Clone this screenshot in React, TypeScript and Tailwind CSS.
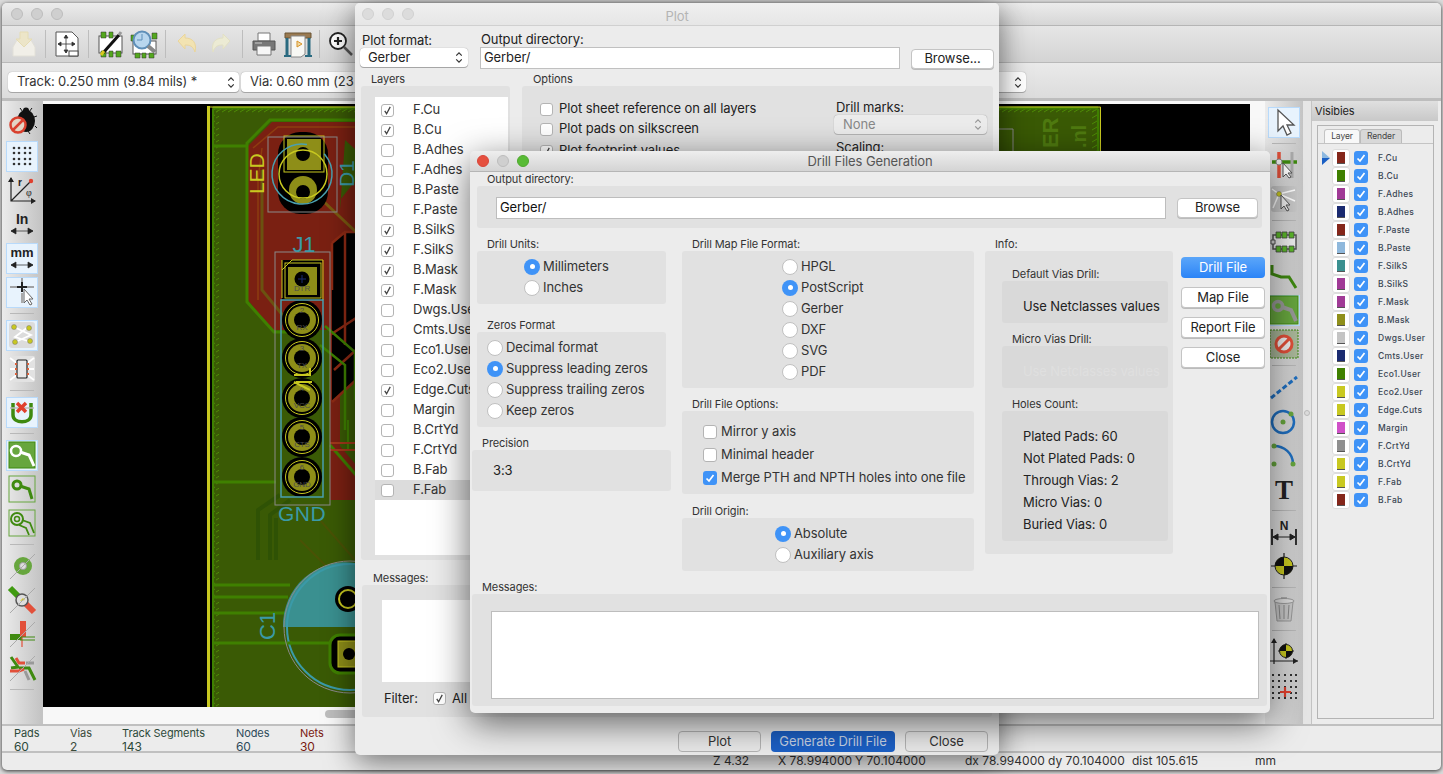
import type { ReactNode } from "react"

const plotLayers = [
  ["F.Cu", true], ["B.Cu", true], ["B.Adhes", false], ["F.Adhes", false], ["B.Paste", false],
  ["F.Paste", false], ["B.SilkS", true], ["F.SilkS", true], ["B.Mask", true], ["F.Mask", true],
  ["Dwgs.User", false], ["Cmts.User", false], ["Eco1.User", false], ["Eco2.User", false], ["Edge.Cuts", true],
  ["Margin", false], ["B.CrtYd", false], ["F.CrtYd", false], ["B.Fab", false], ["F.Fab", false],
] as const

const visibleLayers = [
  ["F.Cu", "#84261a"], ["B.Cu", "#3f8000"], ["F.Adhes", "#a03a96"], ["B.Adhes", "#1a2a70"], ["F.Paste", "#84261a"],
  ["B.Paste", "#8fb8dc"], ["F.SilkS", "#3a9090"], ["B.SilkS", "#a03a96"], ["F.Mask", "#a03a96"], ["B.Mask", "#8f8f1a"],
  ["Dwgs.User", "#c4c4c4"], ["Cmts.User", "#1a2a70"], ["Eco1.User", "#3f8000"], ["Eco2.User", "#c8c820"], ["Edge.Cuts", "#c8c820"],
  ["Margin", "#d050c8"], ["F.CrtYd", "#8f8f8f"], ["B.CrtYd", "#c8c820"], ["F.Fab", "#c8c820"], ["B.Fab", "#84261a"],
]

const msgColumns = [
  { label: "Pads", value: "60", w: "w-[56px]", c: "text-[#2c4a3a]" },
  { label: "Vias", value: "2", w: "w-[52px]", c: "text-[#3a4a3a]" },
  { label: "Track Segments", value: "143", w: "w-[114px]", c: "text-[#2c4a3a]" },
  { label: "Nodes", value: "60", w: "w-[64px]", c: "text-[#2c4a5a]" },
  { label: "Nets", value: "30", w: "w-[50px]", c: "text-[#7a1a10]" },
]

function Ico({ children }: { children: ReactNode }) {
  return (
    <svg viewBox="0 0 30 30" className="h-[30px] w-[30px]">
      {children}
    </svg>
  )
}

function Sep() {
  return <div className="mx-[4px] h-[28px] w-px shrink-0 bg-[#bdbdbd]" />
}

function HSep() {
  return <div className="my-[4px] h-px w-[24px] shrink-0 bg-[#b8b8b8]" />
}

function TopBtn({ children }: { children: ReactNode }) {
  return <div className="flex h-[34px] w-[34px] shrink-0 items-center justify-center">{children}</div>
}

function Tool({ on, children }: { on?: boolean; children: ReactNode }) {
  return (
    <div className="flex h-[34px] w-[38px] shrink-0 items-center justify-center">
      <div className={`flex h-[31px] w-[32px] items-center justify-center ${on ? "border border-[#b8dafb] bg-[#e8f3fd]" : ""}`}>
        {children}
      </div>
    </div>
  )
}

function Chevrons({ muted }: { muted?: boolean }) {
  return (
    <svg viewBox="0 0 8 14" className="h-[13px] w-[8px]" fill="none" stroke={muted ? "#999" : "#333"} strokeWidth="1.3">
      <path d="M1 5l3-3 3 3M1 9l3 3 3-3" />
    </svg>
  )
}

function Light({ c }: { c: string }) {
  return <div className={`h-[12px] w-[12px] rounded-full border ${c}`} />
}

function Check({ on, blue, big }: { on?: boolean; blue?: boolean; big?: boolean }) {
  if (blue) {
    return (
      <div className="flex h-[14px] w-[14px] shrink-0 items-center justify-center rounded-[3px] bg-[#3f93f7]">
        <svg viewBox="0 0 12 12" className="h-[12px] w-[12px]" fill="none" stroke="#fff" strokeWidth="1.7">
          <path d="M2.5 6.5l2.5 2.5 4.5-6" />
        </svg>
      </div>
    )
  }
  return (
    <div className={`flex shrink-0 items-center justify-center rounded-[3px] border border-[#b4b4b4] bg-white ${big ? "h-[14px] w-[14px]" : "h-[13px] w-[13px]"}`}>
      {on && (
        <svg viewBox="0 0 12 12" className="h-[11px] w-[11px]" fill="none" stroke="#444" strokeWidth="1.4">
          <path d="M3 6.5l2 3 4-7.5" />
        </svg>
      )}
    </div>
  )
}

function Radio({ on, label }: { on?: boolean; label: string }) {
  return (
    <div className="flex h-[21px] items-center gap-[3px] text-[13px] text-[#333]">
      {on ? (
        <div className="flex h-[16px] w-[16px] items-center justify-center rounded-full bg-[#3f93f7]">
          <div className="h-[5px] w-[5px] rounded-full bg-white" />
        </div>
      ) : (
        <div className="h-[16px] w-[16px] rounded-full border border-[#c0c0c0] bg-white" />
      )}
      <span>{label}</span>
    </div>
  )
}

function Group({ title, box, pad, children }: { title: string; box: string; pad?: string; children: ReactNode }) {
  return (
    <div>
      <div className={`h-[14px] text-[11px] leading-[14px] text-[#333] ${pad ?? "pl-[10px]"}`}>{title}</div>
      <div className={`rounded-[3px] bg-[#e1e1e1] ${box}`}>{children}</div>
    </div>
  )
}

function Btn({ label, className }: { label: string; className?: string }) {
  return (
    <div className={`flex items-center justify-center rounded-[4px] border border-[#c4c4c4] bg-white text-[13px] text-[#222] shadow-[0_1px_0_#bbb] ${className ?? ""}`}>
      {label}
    </div>
  )
}

function Pad({ x, y, label, n }: { x: number; y: number; label: string; n: string }) {
  return (
    <g>
      <circle cx={x} cy={y} r="20" fill="#000" />
      <circle cx={x} cy={y} r="16.5" fill="none" stroke="#c8c820" strokeWidth="1" />
      <circle cx={x} cy={y} r="14" fill="#8e8e18" />
      <circle cx={x} cy={y} r="8" fill="#000" />
      <text x={x} y={y - 7} textAnchor="middle" fontSize="8" fill="#4d4d4d" fontFamily="Liberation Sans">{n}</text>
      <text x={x} y={y + 10} textAnchor="middle" fontSize="8" fill="#4d4d4d" fontFamily="Liberation Sans">{label}</text>
    </g>
  )
}

function Pcb() {
  return (
    <svg viewBox="43 104 1207 603" className="block h-[603px] w-[1207px]">
      <defs>
        <pattern id="hatch" width="6" height="6" patternUnits="userSpaceOnUse">
          <path d="M0 4l5-3" stroke="#4c8a05" strokeWidth="1" />
        </pattern>
      </defs>
      <rect x="43" y="104" width="1207" height="603" fill="#000" />
      <rect x="212" y="107" width="888" height="600" fill="#3a5a05" />
      <rect x="213" y="107" width="6" height="600" fill="url(#hatch)" />
      <rect x="213" y="108" width="885" height="5" fill="url(#hatch)" />
      <rect x="1092" y="107" width="7" height="600" fill="url(#hatch)" />
      <path d="M213 109V707M1098 109V707" stroke="#3f8000" strokeWidth="2" />
      <path d="M213 108H1098" stroke="#3f8000" strokeWidth="3" />
      <path d="M208.500 106V707" stroke="#c8c820" strokeWidth="3" />
      <path d="M207 107H1100.500V170" stroke="#c8c820" strokeWidth="1" fill="none" />

      {/* tracks under the copper */}
      <path d="M258 560V510L280 495M270 560V515L290 500M276 560V518" stroke="#2f5205" strokeWidth="4" fill="none" />
      <path d="M300 540l50 50M320 520l35 40" stroke="#4a5205" strokeWidth="2" fill="none" />

      {/* front copper zone */}
      <path d="M248 146L272 122H356V330H340V446L356 465V500H330V330H272L248 300Z" fill="#7a2012" />
      <path d="M356 120H270L247 143V302L274 332H296" fill="none" stroke="#3f8000" strokeWidth="3" />
      <path d="M253 148L278 127H356M258 300V180L262 148" fill="none" stroke="#8d3c10" strokeWidth="1.5" />
      <path d="M262 170V290L285 318" fill="none" stroke="#6b5210" strokeWidth="3" />

      {/* unfilled pockets on the right */}
      <path d="M332 243L345 232H356V380L332 402Z" fill="#000" />
      <path d="M332 243L345 232H356M332 243V290M345 232V345" stroke="#8d2a14" strokeWidth="2.500" fill="none" />
      <path d="M330 335L356 318M334 370L356 350M332 402L356 380" stroke="#8d2a14" strokeWidth="2.500" fill="none" />
      <path d="M325 326L355 352V400M320 345L345 365V430" stroke="#3f8000" strokeWidth="2.500" fill="none" />
      <path d="M330 445L356 475" stroke="#3f8000" strokeWidth="3" fill="none" />
      <path d="M345 140L356 150V180L340 200V210" fill="#3a5a05" />
      <path d="M322 200L356 232" stroke="#7a5a10" strokeWidth="3" fill="none" />
      <path d="M348 420V450H356" stroke="#3f8000" strokeWidth="2" fill="none" />
      <path d="M330 443H356M330 450H356" stroke="#a2381a" strokeWidth="2" fill="none" />

      {/* horizontal tracks */}
      <path d="M213 146H248M213 482H276M213 585H290M213 597H288M213 613H286M213 643H292" stroke="#3f8000" strokeWidth="3" fill="none" />

      {/* D1 */}
      <rect x="278" y="132" width="50" height="82" rx="22" fill="#000" />
      <rect x="284" y="136" width="40" height="36" fill="none" stroke="#c8c820" strokeWidth="1" />
      <rect x="287" y="139" width="34" height="31" fill="#8e8e18" />
      <circle cx="303" cy="154" r="7" fill="#000" />
      <circle cx="303" cy="190" r="14" fill="#8e8e18" />
      <circle cx="303" cy="192" r="7" fill="#000" />
      <circle cx="303" cy="174" r="24" fill="none" stroke="#c8c820" strokeWidth="1.500" />
      <circle cx="302" cy="174" r="30" fill="none" stroke="#4aa0b0" strokeWidth="1.500" strokeDasharray="120 20" transform="rotate(50 302 174)" />
      <rect x="268" y="137" width="69" height="75" fill="none" stroke="#8a8a8a" strokeWidth="1" />
      <text transform="translate(264 194) rotate(-90)" fontSize="21" fill="#c8c820" fontFamily="Liberation Sans">LED</text>
      <text transform="translate(354 187) rotate(-90)" fontSize="21" fill="#3a9aa8" fontFamily="Liberation Sans">D1</text>

      {/* J1 */}
      <rect x="282" y="260" width="40" height="40" fill="#000" />
      <rect x="285" y="263" width="36" height="35" fill="none" stroke="#c8c820" strokeWidth="1" />
      <rect x="288" y="267" width="29" height="28" fill="#8e8e18" />
      <circle cx="302" cy="279" r="7.500" fill="#000" />
      <path d="M298 279h8M302 275v8" stroke="#1a2a70" strokeWidth="1" />
      <text x="302" y="291" textAnchor="middle" fontSize="8" fill="#4d4d4d" fontFamily="Liberation Sans">DTR</text>
      <Pad x={302} y={320} n="2" label="RX" />
      <Pad x={302} y={358} n="3" label="TX" />
      <Pad x={302} y={398} n="4" label="VCC" />
      <Pad x={302} y={437} n="5" label="CTS" />
      <Pad x={302} y={477} n="6" label="GND" />
      <path d="M282 270L292 260H323V300M282 260V298" stroke="#c8c820" strokeWidth="1" fill="none" />
      <rect x="281" y="300" width="42" height="197" fill="none" stroke="#4aa0b0" strokeWidth="1.500" />
      <rect x="275" y="252" width="55" height="253" fill="none" stroke="#8a8a8a" strokeWidth="1" />
      <path d="M294 375H310V368M296 382H312M294 382L310 390" stroke="#c8c820" strokeWidth="2" fill="none" />
      <text x="304" y="252" textAnchor="middle" fontSize="22" fill="#3a9aa8" fontFamily="Liberation Sans">J1</text>
      <text x="302" y="521" textAnchor="middle" fontSize="21" letterSpacing="0.500" fill="#3a9aa8" fontFamily="Liberation Sans">GND</text>

      {/* C1 */}
      <path d="M283 627A63 63 0 0 1 356 563V627Z" fill="#3a9090" />
      <circle cx="350" cy="627" r="63" fill="none" stroke="#3a9aa8" strokeWidth="2" />
      <circle cx="350" cy="627" r="66" fill="none" stroke="#8a8a8a" strokeWidth="1" />
      <path d="M288 643H356" stroke="#3f8000" strokeWidth="3" />
      <circle cx="348" cy="599" r="13" fill="#000" />
      <circle cx="348" cy="599" r="9" fill="none" stroke="#c8c820" strokeWidth="2" />
      <rect x="330" y="635" width="36" height="38" rx="10" fill="#000" stroke="#3f8000" strokeWidth="3" />
      <rect x="338" y="641" width="26" height="26" fill="#8e8e18" stroke="#c8c820" />
      <circle cx="349" cy="654" r="6" fill="#000" />
      <text transform="translate(275 640) rotate(-90)" fontSize="22" fill="#3a9aa8" fontFamily="Liberation Sans">C1</text>

      {/* board area right of the plot window */}
      <path d="M990 129H1013V170" stroke="#8a8a8a" fill="none" />
      <text transform="translate(1058 148) rotate(-90)" fontSize="22" fontWeight="700" fill="#4f7a10" fontFamily="Liberation Sans">ER</text>
      <text transform="translate(1086 148) rotate(-90)" fontSize="20" fontWeight="700" fill="#4f7a10" fontFamily="Liberation Sans">.nl</text>
    </svg>
  )
}

function MainWindow() {
  return (
    <div className="ml-[2px] mt-[3px] flex h-[767px] w-[1439px] flex-col overflow-hidden rounded-[5px] bg-[#ececec] shadow-[0_1px_4px_rgba(0,0,0,0.8)]">
      <div className="flex h-[23px] shrink-0 items-center gap-[8px] border-b border-[#b5b5b5] bg-linear-to-b from-[#ececec] to-[#d6d6d6] pl-[9px]">
        <Light c="border-[#bcbcbc] bg-[#cfcfcf]" />
        <Light c="border-[#bcbcbc] bg-[#cfcfcf]" />
        <Light c="border-[#bcbcbc] bg-[#cfcfcf]" />
      </div>

      <div className="flex h-[37px] shrink-0 items-center border-b border-[#b9b9b9] bg-linear-to-b from-[#e6e6e6] to-[#d4d4d4] pl-[5px]">
        <TopBtn>
          <Ico>
            <path d="M4 18l4-7h14l4 7v9H4z" fill="#f1efe8" stroke="#e2e0d8" />
            <path d="M11 3h8v7h4l-8 8-8-8h4z" fill="#ece5c8" stroke="#e5dcb4" />
          </Ico>
        </TopBtn>
        <Sep />
        <TopBtn>
          <Ico>
            <path d="M4 3h16l6 6v18H4z" fill="#fff" stroke="#555" />
            <path d="M14 6v18M6 15h17M14 6l-2 3h4zM14 24l-2-3h4zM6 15l3-2v4zM23 15l-3-2v4z" fill="#333" stroke="#333" strokeWidth="0.8" />
            <rect x="17" y="22" width="9" height="5" fill="#fff" stroke="#444" />
          </Ico>
        </TopBtn>
        <Sep />
        <TopBtn>
          <Ico>
            <rect x="4" y="7" width="23" height="17" fill="#fff" stroke="#555" />
            <path d="M6 3h5v6H6zM14 3h4v6h-4zM6 22h5v6H6zM14 22h4v6h-4zM21 22h5v6h-5z" fill="#54a81e" stroke="#333" strokeWidth="0.5" />
            <path d="M8 24L24 6" stroke="#111" strokeWidth="3" />
            <path d="M24 6l2-3" stroke="#999" strokeWidth="3" />
            <path d="M6 26l3-4" stroke="#d8c820" strokeWidth="3" />
          </Ico>
        </TopBtn>
        <TopBtn>
          <Ico>
            <rect x="4" y="12" width="23" height="13" fill="#fff" stroke="#555" />
            <path d="M2 6h5v6H2zM23 4h5v6h-5zM6 24h5v5H6zM13 24h4v5h-4zM20 24h5v5h-5z" fill="#54a81e" stroke="#333" strokeWidth="0.5" />
            <circle cx="13" cy="11" r="8.500" fill="#b8d6ee" stroke="#5f8fb8" strokeWidth="2" />
            <path d="M13 5v6H8" stroke="#5f8fb8" fill="none" />
            <path d="M19 17l7 6" stroke="#888" strokeWidth="4" />
          </Ico>
        </TopBtn>
        <Sep />
        <TopBtn>
          <Ico>
            <path d="M6 12l7-7v4c8 0 12 5 10 14-2-6-5-7-10-7v4z" fill="#f2e3b2" stroke="#ead59a" />
          </Ico>
        </TopBtn>
        <TopBtn>
          <Ico>
            <path d="M24 12l-7-7v4c-8 0-12 5-10 14 2-6 5-7 10-7v4z" fill="#ecebd4" stroke="#e2e0c4" />
          </Ico>
        </TopBtn>
        <Sep />
        <TopBtn>
          <Ico>
            <path d="M9 4h12v8H9z" fill="#fff" stroke="#777" />
            <path d="M4 12h22v9H4z" fill="#777" stroke="#555" />
            <path d="M8 17h14v9H8z" fill="#f6f6f6" stroke="#777" />
            <path d="M6 14h7" stroke="#ccc" />
          </Ico>
        </TopBtn>
        <TopBtn>
          <Ico>
            <path d="M2 4h26v5H2z" fill="#9a7a50" stroke="#6b5535" />
            <path d="M8 7h14v18l-4 3H8z" fill="#f8f8f4" stroke="#888" />
            <path d="M14 12l5 3-5 3z" fill="#f0d8a0" stroke="#d8942a" />
            <path d="M4 9v18M26 9v18" stroke="#2a6a80" strokeWidth="3" />
            <path d="M1 27h7M22 27h7" stroke="#2a6a80" strokeWidth="2" />
          </Ico>
        </TopBtn>
        <Sep />
        <TopBtn>
          <Ico>
            <circle cx="12" cy="12" r="8" fill="#fff" stroke="#222" strokeWidth="1.800" />
            <path d="M8 12h8M12 8v8" stroke="#222" strokeWidth="2.200" />
            <path d="M18 18l8 8" stroke="#555" strokeWidth="2.500" />
          </Ico>
        </TopBtn>
      </div>

      <div className="flex h-[38px] shrink-0 items-center gap-[2px] border-b-3 border-[#bdbdbd] bg-linear-to-b from-[#eaeaea] to-[#dcdcdc] pl-[6px] pt-[3px]">
        <div className="flex h-[20px] w-[231px] items-center justify-between rounded-[4px] bg-white pl-[9px] pr-[4px] text-[13px] text-[#333] shadow-[0_0_1px_#888,0_1px_0_#aaa]">
          <span>Track: 0.250 mm (9.84 mils) *</span>
          <Chevrons />
        </div>
        <div className="flex h-[20px] w-[785px] items-center justify-between rounded-[4px] bg-white pl-[9px] pr-[4px] text-[13px] text-[#333] shadow-[0_0_1px_#888,0_1px_0_#aaa]">
          <span className="w-[104px] overflow-hidden whitespace-nowrap">Via: 0.60 mm (23.6 mils) *</span>
          <Chevrons />
        </div>
      </div>

      <div className="flex h-[623px] shrink-0">
        <div className="flex w-[39px] shrink-0 flex-col items-center bg-linear-to-r from-[#ececec] to-[#c4c4c4] pt-[4px]">
          <Tool>
            <Ico>
              <ellipse cx="19" cy="14" rx="9" ry="11" fill="#111" />
              <circle cx="19" cy="3.500" r="3" fill="#111" />
              <path d="M13 1l3 4M25 1l-3 4M27 10l3-1M28 19l2 2M21 24l2 3" stroke="#111" />
              <circle cx="11" cy="18" r="7.500" fill="#e4d4c4" stroke="#d8402e" strokeWidth="2.500" />
              <path d="M6 23L16 13" stroke="#d8402e" strokeWidth="2.500" />
            </Ico>
          </Tool>
          <Tool on>
            <svg viewBox="0 0 30 30" className="h-[30px] w-[30px]" fill="#333">
              {[7, 12, 18, 23].flatMap((y) => [7, 12, 18, 23].map((x) => <circle key={`${x}-${y}`} cx={x} cy={y} r="1.300" />))}
            </svg>
          </Tool>
          <Tool>
            <Ico>
              <path d="M4 3v23h24M4 26L24 6" stroke="#222" strokeWidth="1.200" fill="none" />
              <path d="M4 2l-3 5h6zM29 26l-5-3v6z" fill="#222" />
              <circle cx="24" cy="6" r="2.200" fill="#e0402e" />
              <text x="11" y="11" fontSize="10" fontWeight="700" fill="#222" fontFamily="Liberation Sans">r</text>
              <text x="19" y="21" fontSize="10" fill="#222" fontFamily="Liberation Serif">φ</text>
            </Ico>
          </Tool>
          <Tool>
            <Ico>
              <text x="15" y="15" textAnchor="middle" fontSize="14" fontWeight="600" fill="#222" fontFamily="Liberation Sans">In</text>
              <path d="M4 22h22M4 22l5-3v6zM26 22l-5-3v6z" fill="#222" stroke="#222" strokeWidth="0.700" />
            </Ico>
          </Tool>
          <Tool on>
            <Ico>
              <text x="15" y="14" textAnchor="middle" fontSize="13" fontWeight="700" fill="#222" fontFamily="Liberation Sans">mm</text>
              <path d="M4 22h22M4 22l5-3v6zM26 22l-5-3v6z" fill="#222" stroke="#222" strokeWidth="0.700" />
            </Ico>
          </Tool>
          <Tool on>
            <Ico>
              <path d="M3 10h24M15 1v8" stroke="#888" strokeWidth="1.500" />
              <path d="M10 10h10M15 5v10" stroke="#222" strokeWidth="2" />
              <path d="M15 16v10" stroke="#aaa" strokeWidth="2" />
              <path d="M17 12v14l3-3 3 5 2-1-3-5h4z" fill="#fff" stroke="#666" />
            </Ico>
          </Tool>
          <HSep />
          <Tool on>
            <Ico>
              <rect x="2" y="2" width="26" height="26" rx="3" fill="#dcdcdc" />
              <path d="M7 7l17 8-18 8M21 7L8 17l16 5" stroke="#fff" strokeWidth="1.800" fill="none" />
              <circle cx="7" cy="7" r="2.500" fill="#c8c820" stroke="#777" strokeWidth="0.500" />
              <circle cx="22" cy="8" r="2.500" fill="#c8c820" stroke="#777" strokeWidth="0.500" />
              <circle cx="8" cy="22" r="2.500" fill="#c8c820" stroke="#777" strokeWidth="0.500" />
              <circle cx="23" cy="21" r="2.500" fill="#c8c820" stroke="#777" strokeWidth="0.500" />
            </Ico>
          </Tool>
          <Tool>
            <Ico>
              <rect x="2" y="2" width="26" height="26" rx="2" fill="#e2e2e2" />
              <path d="M3 4l8 6M27 4l-8 6M3 15h7M27 15h-7M3 26l8-6M27 26l-8-6" stroke="#fff" strokeWidth="1.800" />
              <rect x="10" y="6" width="10" height="18" rx="1" fill="#e8e8e8" stroke="#222" strokeWidth="1.200" />
              <path d="M8 10h2M8 15h2M8 20h2M20 10h2M20 15h2M20 20h2" stroke="#d8603a" strokeWidth="2" />
            </Ico>
          </Tool>
          <HSep />
          <Tool on>
            <Ico>
              <path d="M6 6v12c0 9 18 9 18 0V6" fill="none" stroke="#3f8a10" strokeWidth="3.500" />
              <path d="M3 11h24" stroke="#bbb" strokeWidth="1.500" />
              <path d="M10 6l9 9M19 6l-9 9" stroke="#e0402e" strokeWidth="3.500" />
            </Ico>
          </Tool>
          <HSep />
          <Tool on>
            <Ico>
              <rect x="2" y="2" width="26" height="26" fill="#67a63e" stroke="#3f8a10" />
              <circle cx="9" cy="11" r="5" fill="none" stroke="#fff" strokeWidth="2.500" />
              <path d="M13 12l9 3 5 11" fill="none" stroke="#fff" strokeWidth="3" />
            </Ico>
          </Tool>
          <Tool>
            <Ico>
              <rect x="2" y="2" width="26" height="26" fill="none" stroke="#67a63e" />
              <circle cx="10" cy="11" r="4" fill="none" stroke="#3f8a10" strokeWidth="3" />
              <path d="M13 12l9 3 3 10" fill="none" stroke="#3f8a10" strokeWidth="3" />
            </Ico>
          </Tool>
          <Tool>
            <Ico>
              <rect x="2" y="2" width="26" height="26" fill="none" stroke="#67a63e" />
              <circle cx="10" cy="11" r="6" fill="none" stroke="#3f8a10" strokeWidth="2" />
              <circle cx="10" cy="11" r="2.500" fill="none" stroke="#3f8a10" strokeWidth="1.500" />
              <path d="M15 12l8 3 4 10M12 17l7 3 3 7" fill="none" stroke="#3f8a10" strokeWidth="1.800" />
            </Ico>
          </Tool>
          <HSep />
          <Tool>
            <Ico>
              <circle cx="16" cy="15" r="9" fill="#67a63e" />
              <circle cx="16" cy="15" r="3.500" fill="#ddd" stroke="#999" />
              <path d="M3 28L28 3" stroke="#aaa" />
            </Ico>
          </Tool>
          <Tool>
            <Ico>
              <path d="M3 3l12 12" stroke="#3f9a10" strokeWidth="6" />
              <path d="M15 15l12 12" stroke="#e2503a" strokeWidth="6" />
              <circle cx="15" cy="15" r="6" fill="#ddd" stroke="#555" strokeWidth="1.500" />
              <path d="M13 16l3-3 2 2z" fill="#d8c820" />
              <path d="M3 28L28 3" stroke="#aaa" />
            </Ico>
          </Tool>
          <Tool>
            <Ico>
              <rect x="3" y="15" width="12" height="6" fill="#3f8a10" />
              <rect x="13" y="2" width="6" height="16" fill="#e2503a" />
              <path d="M15 18v10" stroke="#e2503a" strokeWidth="1.200" />
              <path d="M13 18h15M13 21h15" stroke="#3f8a10" />
              <path d="M3 28L28 3" stroke="#aaa" />
            </Ico>
          </Tool>
          <Tool>
            <Ico>
              <path d="M4 4l7 10-7 1M28 27l-6-12h-10" fill="none" stroke="#3f8a10" strokeWidth="3" />
              <path d="M9 5l3 5h6" fill="none" stroke="#e2503a" strokeWidth="3" />
              <path d="M3 18h9l5-2" fill="none" stroke="#e2503a" strokeWidth="3" />
              <path d="M19 10h8M18 18l4 9" fill="none" stroke="#999" strokeWidth="3" />
              <path d="M3 28L28 3" stroke="#aaa" />
            </Ico>
          </Tool>
          <HSep />
        </div>
        <div className="flex w-[1224px] shrink-0 flex-col border-l-2 border-[#c4c4c4] bg-[#f8f8f8] pr-[15px] pt-[3px]">
          <Pcb />
          <div className="flex h-[13px] items-center pl-[282px]">
            <div className="h-[8px] w-[120px] rounded-full bg-[#bdbdbd]" />
          </div>
        </div>
        <div className="flex w-[38px] shrink-0 flex-col items-center bg-linear-to-r from-[#ececec] to-[#c4c4c4] pt-[4px]">
          <Tool on>
            <Ico>
              <path d="M9 3v21l5-5 4 9 4-2-4-8h7z" fill="#fff" stroke="#555" strokeWidth="1.300" />
            </Ico>
          </Tool>
          <HSep />
          <Tool>
            <Ico>
              <path d="M3 12h25" stroke="#3f8a10" strokeWidth="3.500" />
              <path d="M10 2v26" stroke="#e2503a" strokeWidth="3.500" />
              <path d="M23 2v26" stroke="#aaa" strokeWidth="3" />
              <circle cx="10" cy="12" r="3" fill="#eee" stroke="#888" />
              <path d="M14 13v14l3-3 3 4 2-1-3-4h4z" fill="#fff" stroke="#555" />
            </Ico>
          </Tool>
          <Tool>
            <Ico>
              <rect x="2" y="2" width="26" height="26" rx="3" fill="#c8c8c8" />
              <path d="M10 10L3 5M10 10L26 6M10 10L4 24M10 10L26 17" stroke="#fff" strokeWidth="1.500" />
              <circle cx="10" cy="10" r="2.500" fill="#c8c820" stroke="#666" strokeWidth="0.500" />
              <path d="M12 11v14l3-3 3 5 2-1-3-5h4z" fill="#eee" stroke="#555" />
            </Ico>
          </Tool>
          <HSep />
          <Tool>
            <Ico>
              <rect x="4" y="8" width="23" height="14" fill="#eee" stroke="#555" strokeWidth="1.500" />
              <path d="M7 5h5v6H7zM13 5h5v6h-5zM20 5h5v6h-5zM7 19h5v6H7zM13 19h5v6h-5zM20 19h5v6h-5z" fill="#5cb82a" stroke="#444" strokeWidth="0.800" />
              <path d="M2 13h4v4H2z" fill="#ddd" stroke="#555" />
            </Ico>
          </Tool>
          <Tool>
            <Ico>
              <path d="M3 4v9l9 3h8l7 11" fill="none" stroke="#3f8a10" strokeWidth="3" />
            </Ico>
          </Tool>
          <Tool on>
            <Ico>
              <rect x="1" y="1" width="28" height="28" fill="#67a63e" stroke="#3f8a10" />
              <circle cx="9" cy="11" r="4.500" fill="none" stroke="#999" strokeWidth="3.500" />
              <path d="M13 12l9 3 5 11" fill="none" stroke="#999" strokeWidth="4" />
            </Ico>
          </Tool>
          <Tool>
            <Ico>
              <rect x="1" y="1" width="28" height="28" fill="#aab89a" stroke="#3f8a10" strokeDasharray="2 1" />
              <circle cx="15" cy="15" r="8" fill="#eee" stroke="#e2503a" strokeWidth="3" />
              <path d="M9 21L21 9" stroke="#e2503a" strokeWidth="3" />
            </Ico>
          </Tool>
          <HSep />
          <Tool>
            <Ico>
              <path d="M2 26L28 5" stroke="#1f6fc0" strokeWidth="3" strokeDasharray="5 2.500" />
            </Ico>
          </Tool>
          <Tool>
            <Ico>
              <circle cx="14" cy="16" r="11" fill="none" stroke="#1f6fc0" strokeWidth="2.500" />
              <circle cx="14" cy="16" r="2.500" fill="#67a63e" />
              <circle cx="22" cy="8" r="2.500" fill="#67a63e" />
            </Ico>
          </Tool>
          <Tool>
            <Ico>
              <path d="M5 6c10 0 19 7 19 18" fill="none" stroke="#1f6fc0" strokeWidth="2.500" />
              <circle cx="5" cy="6" r="2.500" fill="#67a63e" />
              <circle cx="24" cy="24" r="2.500" fill="#67a63e" />
              <circle cx="5" cy="24" r="2.500" fill="#67a63e" />
            </Ico>
          </Tool>
          <Tool>
            <Ico>
              <text x="15" y="25" textAnchor="middle" fontSize="27" fontWeight="700" fill="#222" fontFamily="Liberation Serif">T</text>
            </Ico>
          </Tool>
          <HSep />
          <Tool>
            <Ico>
              <text x="15" y="13" textAnchor="middle" fontSize="12" fontWeight="700" fill="#222" fontFamily="Liberation Sans">N</text>
              <path d="M3 12v16M27 12v16" stroke="#222" strokeWidth="1.800" />
              <path d="M4 20h22M4 20l5-3v6zM26 20l-5-3v6z" fill="#222" stroke="#222" />
            </Ico>
          </Tool>
          <Tool>
            <Ico>
              <path d="M15 2v26M2 15h26" stroke="#222" strokeWidth="1.200" />
              <circle cx="15" cy="15" r="9" fill="#c8c820" stroke="#222" />
              <path d="M15 6a9 9 0 0 0-9 9h9zM15 24a9 9 0 0 0 9-9h-9z" fill="#111" />
            </Ico>
          </Tool>
          <HSep />
          <Tool>
            <Ico>
              <path d="M6 8h18l-2 19H8z" fill="#c8c8c8" stroke="#999" />
              <path d="M10 11l1 14M15 11v14M20 11l-1 14" stroke="#888" />
              <ellipse cx="15" cy="7" rx="10" ry="2.500" fill="#ddd" stroke="#999" />
              <path d="M12 4h6" stroke="#999" strokeWidth="1.500" />
            </Ico>
          </Tool>
          <HSep />
          <Tool>
            <Ico>
              <path d="M5 2v25M1 24h28" stroke="#222" strokeWidth="1.200" />
              <path d="M5 1l-3 5h6zM29 24l-5-3v6z" fill="#222" />
              <path d="M17 6v16M9 14h16" stroke="#222" />
              <circle cx="17" cy="14" r="6.500" fill="#c8c820" stroke="#222" />
              <path d="M17 7.500a6.500 6.500 0 0 0-6.500 6.500H17zM17 20.500a6.500 6.500 0 0 0 6.500-6.500H17z" fill="#111" />
            </Ico>
          </Tool>
          <Tool>
            <svg viewBox="0 0 30 30" className="h-[30px] w-[30px]">
              {[4, 10, 16, 22, 27].flatMap((y) => [4, 10, 16, 22, 27].map((x) => <rect key={`${x}-${y}`} x={x - 1} y={y - 1} width="2" height="2" fill="#333" />))}
              <path d="M11 21h11M16 16v10" stroke="#e2402e" strokeWidth="2.200" />
            </svg>
          </Tool>
        </div>
        <div className="flex w-[8px] shrink-0 items-center justify-center bg-[#e6e6e6]">
          <div className="h-[6px] w-[6px] rounded-full border border-[#bbb] bg-[#ddd]" />
        </div>
        <div className="flex w-[127px] shrink-0 flex-col border-l border-[#c4c4c4] bg-[#ececec]">
          <div className="flex h-[20px] items-center bg-linear-to-b from-[#e0e0e0] to-[#c8c8c8] pl-[3px] text-[11px] text-[#222]">Visibies</div>
          <div className="ml-[5px] mt-[4px] flex h-[594px] w-[117px] flex-col border border-[#b4b4b4]">
            <div className="flex h-[18px] items-end border-b border-[#c4c4c4] pl-[6px] text-[8.500px] text-[#444]">
              <div className="flex h-[14px] w-[36px] items-center justify-center rounded-t-[3px] border border-b-0 border-[#c4c4c4] bg-[#f8f8f8]">Layer</div>
              <div className="flex h-[14px] w-[42px] items-center justify-center rounded-t-[3px] border border-b-0 border-[#bbb] bg-[#d8d8d8]">Render</div>
            </div>
            <div className="pt-[5px]">
              {visibleLayers.map(([name, color], i) => (
                <div key={name} className="flex h-[18px] items-center pl-[4px]">
                  <div className="flex w-[10px] justify-start">
                    {i === 0 && (
                      <svg viewBox="0 0 8 14" className="h-[14px] w-[8px]">
                        <path d="M0 0l8 7H0z" fill="#8cb8e0" />
                        <path d="M0 14l8-7H0z" fill="#1a5fc4" />
                      </svg>
                    )}
                  </div>
                  <div className="flex h-[18px] w-[18px] items-center justify-center rounded-[3px] border border-[#ddd] bg-white">
                    <div className="h-[12px] w-[8px] border-b border-[#555]" style={{ backgroundColor: color }} />
                  </div>
                  <div className="ml-[4px]">
                    <Check blue on />
                  </div>
                  <span className="ml-[10px] text-[8.500px] font-medium tracking-[0.3px] text-[#3a4654]">{name}</span>
                </div>
              ))}
            </div>
          </div>
        </div>
      </div>

      <div className="flex h-[29px] shrink-0 border-y-2 border-[#c0c0c0] pl-[12px] pt-px text-[11px] leading-[13px]">
        {msgColumns.map((m) => (
          <div key={m.label} className={`${m.w} ${m.c}`}>
            <div>{m.label}</div>
            <div className="text-[12px]">{m.value}</div>
          </div>
        ))}
      </div>
      <div className="flex h-[16px] shrink-0 items-center pl-[711px] text-[12px] tracking-normal text-[#333]">
        <span className="w-[65px]">Z 4.32</span>
        <span className="w-[77px]">X 78.994000</span>
        <span className="w-[110px]">Y 70.104000</span>
        <span className="w-[83px]">dx 78.994000</span>
        <span className="w-[84px]">dy 70.104000</span>
        <span className="w-[123px]">dist 105.615</span>
        <span>mm</span>
      </div>
    </div>
  )
}

function PlotWindow() {
  return (
    <div className="absolute left-[355px] top-[3px] flex h-[752px] w-[644px] flex-col overflow-hidden rounded-[5px] bg-[#ececec] shadow-[0_6px_30px_rgba(0,0,0,0.55)]">
      <div className="relative flex h-[23px] shrink-0 items-center gap-[8px] border-b border-[#d0d0d0] bg-linear-to-b from-[#f0f0f0] to-[#e6e6e6] pl-[7px]">
        <Light c="border-[#d0d0d0] bg-[#dcdcdc]" />
        <Light c="border-[#d0d0d0] bg-[#dcdcdc]" />
        <Light c="border-[#d0d0d0] bg-[#dcdcdc]" />
        <span className="absolute inset-x-0 top-[4px] text-center text-[13px] text-[#b4b4b4]">Plot</span>
      </div>

      <div className="mt-[6px] flex h-[37px] shrink-0">
        <div className="ml-[5px] w-[120px]">
          <div className="h-[16px] pl-[2px] text-[13px] leading-[16px] text-[#222]">Plot format:</div>
          <div className="flex h-[19px] w-[108px] items-center justify-between rounded-[4px] bg-white pl-[8px] pr-[5px] text-[13px] text-[#222] shadow-[0_0_1px_#888,0_1px_0_#aaa]">
            Gerber
            <Chevrons />
          </div>
        </div>
        <div className="w-[431px]">
          <div className="h-[15px] pl-[1px] text-[13px] leading-[15px] text-[#222]">Output directory:</div>
          <div className="flex h-[22px] w-[420px] items-center border border-[#c0c0c0] bg-white pl-[3px] text-[13px] text-[#222]">Gerber/</div>
        </div>
        <Btn label="Browse..." className="mt-[17px] h-[20px] w-[83px]" />
      </div>

      <div className="mt-[3px] flex shrink-0">
        <Group title="Layers" box="ml-[6px] h-[474px] w-[149px] pl-[14px] pt-[11px]" pad="pl-[16px]">
          <div className="h-[458px] w-[133px] bg-white pt-[3px]">
            {plotLayers.map(([name, on]) => (
              <div key={name} className={`flex h-[20px] items-center pl-[6px] text-[13px] text-[#333] ${name === "F.Fab" ? "bg-[#dcdcdc]" : ""}`}>
                <Check on={on} />
                <span className="ml-[19px]">{name}</span>
              </div>
            ))}
          </div>
        </Group>
        <div className="ml-[12px]">
          <div className="h-[14px] pl-[11px] text-[11px] leading-[14px] text-[#333]">Options</div>
          <div className="flex h-[474px] w-[471px] rounded-[3px] bg-[#e1e1e1]">
            <div className="w-[314px] pl-[18px] pt-[13px] text-[13px] text-[#222]">
              <div className="flex h-[20px] items-center gap-[6px]"><Check /> Plot sheet reference on all layers</div>
              <div className="flex h-[20px] items-center gap-[6px]"><Check /> Plot pads on silkscreen</div>
              <div className="mt-[2px] flex h-[20px] items-center gap-[6px]"><Check on /> Plot footprint values</div>
            </div>
            <div className="pt-[12px] text-[13px] text-[#222]">
              <div className="h-[17px]">Drill marks:</div>
              <div className="-ml-[2px] flex h-[19px] w-[153px] items-center justify-between rounded-[4px] bg-[#ececec] pl-[9px] pr-[5px] text-[#888] shadow-[0_0_1px_#888,0_1px_0_#bbb]">
                None
                <Chevrons muted />
              </div>
              <div className="mt-[4px]">Scaling:</div>
            </div>
          </div>
        </div>
      </div>

      <div className="mt-[11px] shrink-0">
        <div className="h-[14px] pl-[18px] text-[11px] leading-[14px] text-[#333]">Messages:</div>
        <div className="ml-[7px] h-[132px] w-[630px] rounded-[3px] bg-[#e1e1e1] px-[20px] pt-[15px]">
          <div className="h-[82px] bg-white" />
          <div className="mt-[7px] flex items-center text-[13px] text-[#222]">
            <span className="ml-[2px] w-[49px]">Filter:</span>
            <Check on />
            <span className="ml-[6px]">All</span>
          </div>
        </div>
      </div>

      <div className="mt-[14px] flex shrink-0 justify-end gap-[10px] pr-[11px]">
        <div className="flex h-[21px] w-[83px] items-center justify-center rounded-[4px] border border-[#b4b4b4] bg-[#eaeaea] text-[13px] text-[#333]">Plot</div>
        <div className="flex h-[21px] w-[124px] items-center justify-center rounded-[4px] bg-[#1c60c6] text-[13px] text-[#c8d4e6]">Generate Drill File</div>
        <div className="flex h-[21px] w-[83px] items-center justify-center rounded-[4px] border border-[#b4b4b4] bg-[#eaeaea] text-[13px] text-[#333]">Close</div>
      </div>
    </div>
  )
}

function DrillWindow() {
  return (
    <div className="absolute left-[470px] top-[151px] flex h-[562px] w-[800px] flex-col overflow-hidden rounded-[5px] bg-[#ececec] shadow-[0_10px_36px_rgba(0,0,0,0.6)]">
      <div className="relative flex h-[21px] shrink-0 items-center gap-[8px] border-b border-[#b5b5b5] bg-linear-to-b from-[#eeeeee] to-[#d4d4d4] pl-[7px]">
        <Light c="border-[#d8453a] bg-[#e5503f]" />
        <Light c="border-[#bcbcbc] bg-[#cfcfcf]" />
        <Light c="border-[#4fa82e] bg-[#58bb35]" />
        <span className="absolute inset-x-0 top-px text-center text-[13px] text-[#555]">Drill Files Generation</span>
      </div>

      <div className="pl-[7px]">
        <Group title="Output directory:" box="flex h-[42px] w-[785px] items-center pl-[19px] pt-[2px]">
          <div className="flex h-[22px] w-[670px] items-center border border-[#bdbdbd] bg-white pl-[3px] text-[13px] text-[#111]">Gerber/</div>
          <Btn label="Browse" className="ml-[11px] h-[20px] w-[81px]" />
        </Group>

        <div className="mt-[9px] flex">
          <div className="w-[189px]">
            <Group title="Drill Units:" box="h-[53px] pl-[47px] pt-[5px]">
              <Radio on label="Millimeters" />
              <Radio label="Inches" />
            </Group>
            <div className="mt-[14px]">
              <Group title="Zeros Format" box="h-[95px] pl-[10px] pt-[5px]">
                <Radio label="Decimal format" />
                <Radio on label="Suppress leading zeros" />
                <Radio label="Suppress trailing zeros" />
                <Radio label="Keep zeros" />
              </Group>
            </div>
            <div className="-mx-[5px] mt-[9px]">
              <Group title="Precision" box="flex h-[41px] w-[199px] items-center pl-[21px] text-[13px] text-[#222]">3:3</Group>
            </div>
          </div>

          <div className="ml-[16px] w-[292px]">
            <Group title="Drill Map File Format:" box="h-[137px] pl-[100px] pt-[5px]">
              <Radio label="HPGL" />
              <Radio on label="PostScript" />
              <Radio label="Gerber" />
              <Radio label="DXF" />
              <Radio label="SVG" />
              <Radio label="PDF" />
            </Group>
            <div className="mt-[9px]">
              <Group title="Drill File Options:" box="h-[83px] pl-[21px] pt-[9px] text-[13px] text-[#333]">
                <div className="flex h-[23px] items-center gap-[4px]"><Check big /> Mirror y axis</div>
                <div className="flex h-[23px] items-center gap-[4px]"><Check big /> Minimal header</div>
                <div className="flex h-[23px] items-center gap-[4px]"><Check blue on /> Merge PTH and NPTH holes into one file</div>
              </Group>
            </div>
            <div className="mt-[10px]">
              <Group title="Drill Origin:" box="h-[53px] pl-[93px] pt-[5px]">
                <Radio on label="Absolute" />
                <Radio label="Auxiliary axis" />
              </Group>
            </div>
          </div>

          <div className="ml-[11px] w-[188px]">
            <Group title="Info:" box="h-[303px] pl-[17px] pt-[16px]">
              <div className="h-[14px] pl-[10px] text-[11px] leading-[14px] text-[#333]">Default Vias Drill:</div>
              <div className="flex h-[42px] w-[166px] items-center rounded-[3px] bg-[#d9d9d9] pl-[21px] pt-[10px] text-[13px] text-[#222]">Use Netclasses values</div>
              <div className="mt-[9px] h-[14px] pl-[10px] text-[11px] leading-[14px] text-[#333]">Micro Vias Drill:</div>
              <div className="flex h-[42px] w-[166px] items-center rounded-[3px] bg-[#d9d9d9] pl-[21px] pt-[10px] text-[13px] text-[#dfdfdf]">Use Netclasses values</div>
              <div className="mt-[9px] h-[14px] pl-[10px] text-[11px] leading-[14px] text-[#333]">Holes Count:</div>
              <div className="h-[130px] w-[166px] rounded-[3px] bg-[#d9d9d9] pl-[21px] pt-[14px] text-[13px] leading-[22px] text-[#222]">
                <div>Plated Pads: 60</div>
                <div>Not Plated Pads: 0</div>
                <div>Through Vias: 2</div>
                <div>Micro Vias: 0</div>
                <div>Buried Vias: 0</div>
              </div>
            </Group>
          </div>

          <div className="ml-[8px] flex w-[84px] flex-col gap-[9px] pt-[20px]">
            <div className="flex h-[21px] items-center justify-center rounded-[4px] bg-linear-to-b from-[#5ba6f9] to-[#2a84f7] text-[13px] text-white">Drill File</div>
            <Btn label="Map File" className="h-[21px]" />
            <Btn label="Report File" className="h-[21px]" />
            <Btn label="Close" className="h-[21px]" />
          </div>
        </div>

        <div className="-ml-[5px] mt-[9px]">
          <Group title="Messages:" box="h-[112px] w-[795px] pl-[19px] pt-[17px]">
            <div className="h-[88px] w-[768px] border border-[#bdbdbd] bg-white" />
          </Group>
        </div>
      </div>
    </div>
  )
}

export default function App() {
  return (
    <div className="relative h-[774px] w-[1443px] overflow-hidden bg-[#dadada] font-['Inter','Liberation_Sans',sans-serif] tracking-[-0.1px]">
      <div className="pt-px">
        <div className="-mt-px">
          <MainWindow />
        </div>
      </div>
      <PlotWindow />
      <DrillWindow />
    </div>
  )
}
